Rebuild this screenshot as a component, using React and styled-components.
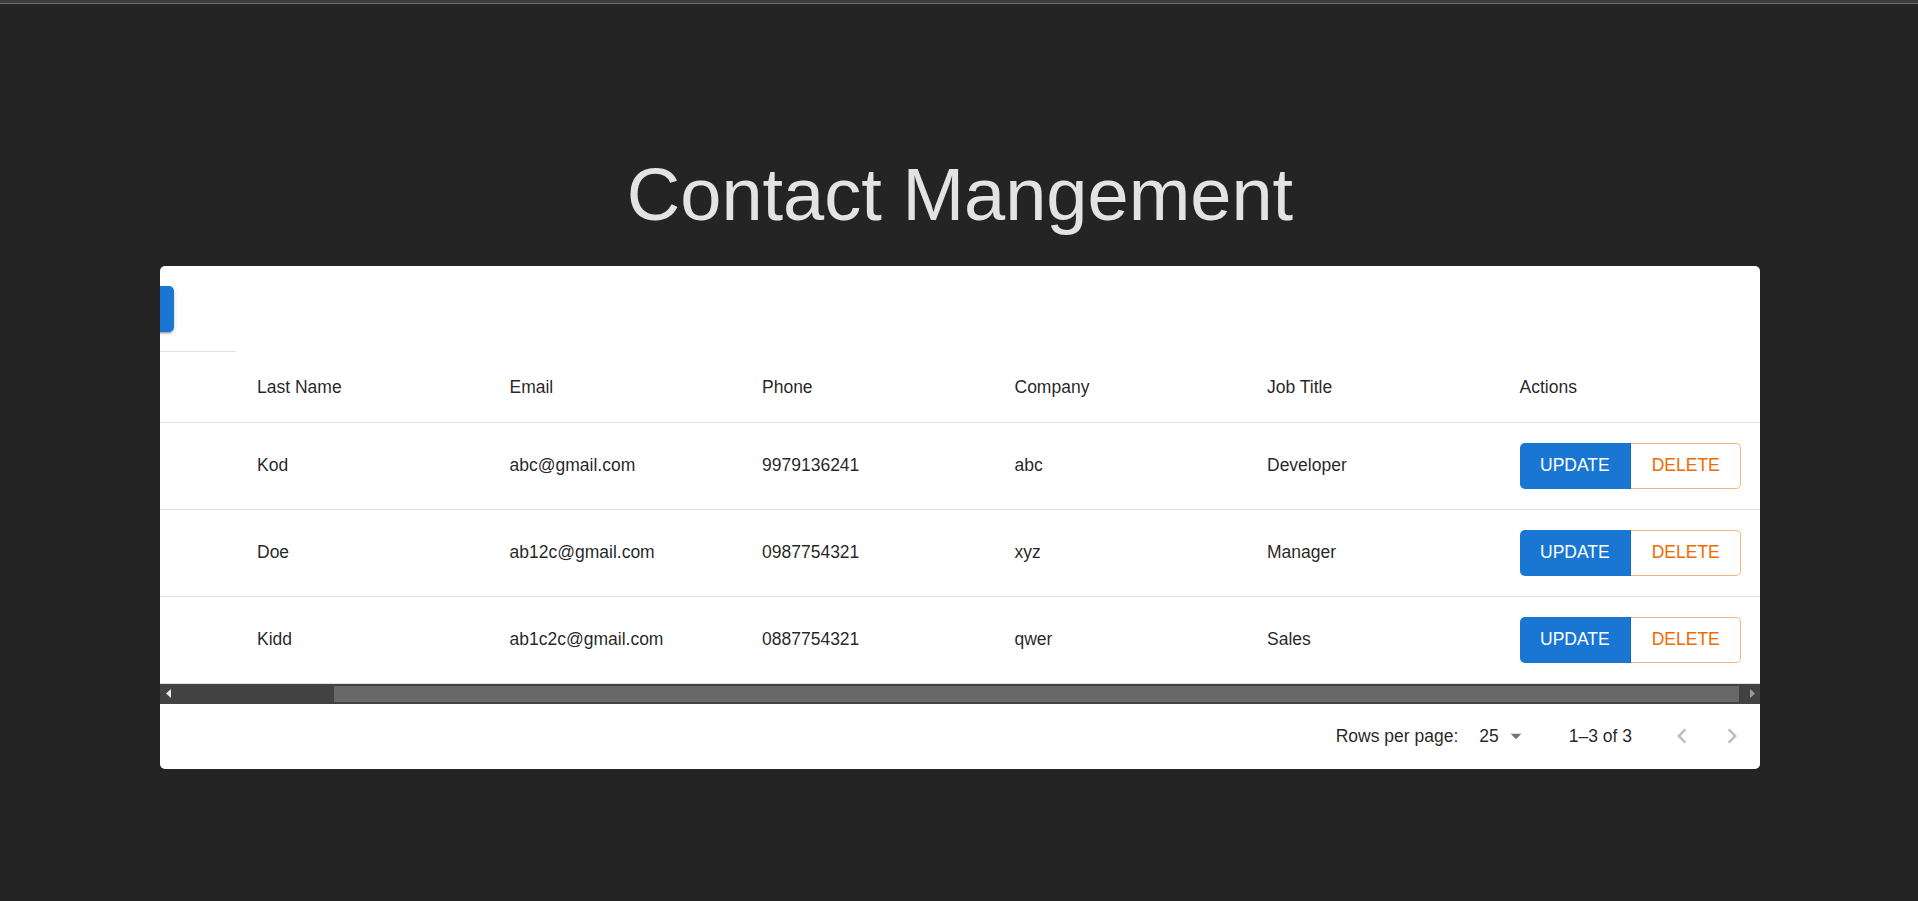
import React, { useLayoutEffect, useRef } from 'react';
import styled, { createGlobalStyle } from 'styled-components';

const GlobalStyle = createGlobalStyle`
  html, body {
    margin: 0;
    padding: 0;
    background: #242424;
  }
  body {
    font-family: "Liberation Sans", Arial, sans-serif;
  }
`

const COL_W = 252.5;
const GUTTER = 16;
const CONTENT_W = GUTTER + COL_W * 7;
const VIEW_W = 1600;
const SCROLL = CONTENT_W - VIEW_W;
const ARROW_W = 17;

const rows = [
  { first: 'Jay', last: 'Kod', email: 'abc@gmail.com', phone: '9979136241', company: 'abc', job: 'Developer' },
  { first: 'Jon', last: 'Doe', email: 'ab12c@gmail.com', phone: '0987754321', company: 'xyz', job: 'Manager' },
  { first: 'Sam', last: 'Kidd', email: 'ab1c2c@gmail.com', phone: '0887754321', company: 'qwer', job: 'Sales' },
];

const TopBar = styled.div`
  height: 3px;
  background: #3c3c3c;
  border-bottom: 1px solid #6e6e6e;
`

const Main = styled.main`
  padding: 147px 0 0 2px;
  display: flex;
  flex-direction: column;
  align-items: center;
  min-height: 750px;
`

const Title = styled.h1`
  margin: 0 0 26px;
  font-size: 74px;
  font-weight: 400;
  line-height: 1.2;
  color: #e3e3e3;
`

const Card = styled.section`
  width: ${VIEW_W}px;
  background: #fff;
  border-radius: 5px;
  overflow: hidden;
  color: rgba(0, 0, 0, 0.87);
  font-size: 17.5px;
`

const Viewport = styled.div`
  width: 100%;
  overflow: hidden;
`

const Content = styled.div`
  width: ${CONTENT_W}px;
`

const Toolbar = styled.div`
  height: 86px;
  box-sizing: border-box;
  position: relative;
  padding: 20px 0 0 28px;
`

const ToolbarDivider = styled.div`
  position: absolute;
  left: 0;
  bottom: 0;
  width: 260px;
  border-bottom: 1px solid #e0e0e0;
`

const AddButton = styled.button`
  height: 46px;
  width: 170px;
  border: 0;
  border-radius: 5px;
  background: #1976d2;
  color: #fff;
  font-family: inherit;
  font-size: 17.5px;
  text-transform: uppercase;
  box-shadow: 0 3px 1px -2px rgba(0,0,0,0.2), 0 2px 2px 0 rgba(0,0,0,0.14), 0 1px 5px 0 rgba(0,0,0,0.12);
`

const Row = styled.div`
  display: grid;
  grid-template-columns: ${GUTTER}px repeat(7, ${COL_W}px);
  height: ${p => (p.$header ? 71 : 87)}px;
  box-sizing: border-box;
  border-bottom: 1px solid #e0e0e0;
  align-items: center;
  padding-top: ${p => (p.$header ? 1 : 0)}px;
`

const Cell = styled.div`
  padding: 0 12.5px;
  white-space: nowrap;
  overflow: hidden;
`

const ButtonGroup = styled.div`
  display: flex;
`

const GroupButton = styled.button`
  height: 46px;
  box-sizing: border-box;
  padding: 0 ${p => (p.$outlined ? 20.5 : 20.5)}px;
  font-family: inherit;
  font-size: 17.5px;
  text-transform: uppercase;
  background: ${p => (p.$outlined ? '#fff' : '#1976d2')};
  color: ${p => (p.$outlined ? '#ed6c02' : '#fff')};
  border: ${p => (p.$outlined ? '1px solid rgba(237,108,2,0.5)' : '0')};
  border-right: ${p => (p.$outlined ? '1px solid rgba(237,108,2,0.5)' : '1px solid #1565c0')};
  border-radius: ${p => (p.$outlined ? '0 5px 5px 0' : '5px 0 0 5px')};
  ${p => p.$outlined && 'border-left: 0;'}
`

const ScrollBar = styled.div`
  display: flex;
  height: 20px;
  background: #424242;
`

const ScrollArrow = styled.div`
  width: ${ARROW_W}px;
  display: flex;
  align-items: center;
  justify-content: center;
  svg { display: block; }
`

const ScrollTrack = styled.div`
  flex: 1;
  display: flex;
  align-items: center;
`

const Thumb = styled.div`
  height: 16px;
  background: #686868;
`

const Footer = styled.div`
  height: 65px;
  display: flex;
  align-items: center;
  justify-content: flex-end;
  padding-right: 3px;
`

const FooterLabel = styled.span`
  margin-right: 21px;
`

const SelectBox = styled.div`
  display: flex;
  align-items: center;
  margin-right: 40px;
  svg { margin-left: 4px; }
`

const Range = styled.span`
  margin-right: 25px;
`

const PageButton = styled.button`
  width: 50px;
  height: 50px;
  padding: 0;
  border: 0;
  background: none;
  display: flex;
  align-items: center;
  justify-content: center;
`

function Chevron({ dir }) {
  const d = dir === 'left'
    ? 'M15.41 16.59 10.83 12l4.58-4.59L14 6l-6 6 6 6z'
    : 'M8.59 16.59 13.17 12 8.59 7.41 10 6l6 6-6 6z';
  return (
    <svg width="30" height="30" viewBox="0 0 24 24"><path d={d} fill="rgba(0,0,0,0.26)" /></svg>
  );
}

function App() {
  const viewRef = useRef(null);

  useLayoutEffect(() => {
    if (viewRef.current) viewRef.current.scrollLeft = SCROLL;
  }, []);

  const trackLen = VIEW_W - ARROW_W * 2;
  const thumbLen = trackLen * VIEW_W / CONTENT_W;
  const thumbOffset = trackLen - thumbLen - 4;

  return (
    <>
      <GlobalStyle />
      <TopBar />
      <Main>
        <Title>Contact Mangement</Title>
        <Card>
          <Viewport ref={viewRef}>
            <Content>
              <Toolbar>
                <AddButton>Add Contact</AddButton>
                <ToolbarDivider />
              </Toolbar>
              <Row $header>
                <span />
                <Cell>First Name</Cell>
                <Cell>Last Name</Cell>
                <Cell>Email</Cell>
                <Cell>Phone</Cell>
                <Cell>Company</Cell>
                <Cell>Job Title</Cell>
                <Cell>Actions</Cell>
              </Row>
              {rows.map(r => (
                <Row key={r.email}>
                  <span />
                  <Cell>{r.first}</Cell>
                  <Cell>{r.last}</Cell>
                  <Cell>{r.email}</Cell>
                  <Cell>{r.phone}</Cell>
                  <Cell>{r.company}</Cell>
                  <Cell>{r.job}</Cell>
                  <Cell>
                    <ButtonGroup>
                      <GroupButton>Update</GroupButton>
                      <GroupButton $outlined>Delete</GroupButton>
                    </ButtonGroup>
                  </Cell>
                </Row>
              ))}
            </Content>
          </Viewport>
          <ScrollBar>
            <ScrollArrow>
              <svg width="6" height="9" viewBox="0 0 6 9"><path d="M5 0v9L0 4.5z" fill="#e8e8e8" /></svg>
            </ScrollArrow>
            <ScrollTrack>
              <Thumb style={{ width: thumbLen, marginLeft: thumbOffset }} />
            </ScrollTrack>
            <ScrollArrow>
              <svg width="6" height="9" viewBox="0 0 6 9"><path d="M1 0v9l5-4.5z" fill="#9a9a9a" /></svg>
            </ScrollArrow>
          </ScrollBar>
          <Footer>
            <FooterLabel>Rows per page:</FooterLabel>
            <SelectBox>
              <span>25</span>
              <svg width="26" height="26" viewBox="0 0 24 24"><path d="M7 10l5 5 5-5z" fill="rgba(0,0,0,0.54)" /></svg>
            </SelectBox>
            <Range>1–3 of 3</Range>
            <PageButton><Chevron dir="left" /></PageButton>
            <PageButton><Chevron dir="right" /></PageButton>
          </Footer>
        </Card>
      </Main>
    </>
  );
}

export default App;
